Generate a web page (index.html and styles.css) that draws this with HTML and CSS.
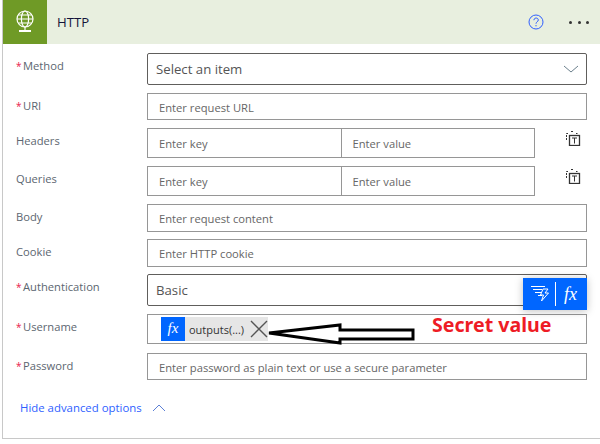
FILE: index.html
```html
<!DOCTYPE html>
<html lang="en">
<head>
    <meta charset="UTF-8">
    <title>HTTP</title>
    <link rel="stylesheet" href="styles.css">
</head>
<body>
    <div class="card">
        <div class="card-header">
            <div class="logo">
                <svg width="22" height="25" viewBox="0 0 22 25" fill="none" stroke="#fff" stroke-width="1.2">
                    <circle cx="11" cy="9" r="8"/>
                    <ellipse cx="11" cy="9" rx="3.6" ry="8"/>
                    <path d="M3 9h16M4.2 5h13.6M4.2 13h13.6M11 17v3"/>
                    <path d="M5 21h12" stroke-width="2"/>
                </svg>
            </div>
            <div class="card-title">HTTP</div>
            <svg class="help" width="16" height="16" viewBox="0 0 16 16" fill="none" stroke="#2f5fff" stroke-width="1">
                <circle cx="8" cy="8" r="7"/>
                <path d="M5.9 6.2c0-3 4.4-2.800 4.400-.2 0 1.800-2.300 1.800-2.300 3.700"/>
                <path d="M8 11v1.300"/>
            </svg>
            <div class="more"><span></span><span></span><span></span></div>
        </div>

        <div class="form">
            <div class="row h32">
                <div class="label"><i>*</i>Method</div>
                <div class="field dark select">
                    Select an item
                    <svg width="16" height="8" viewBox="0 0 16 8" fill="none" stroke="#6b7f8c"><path d="M1 1l7 6 7-6"/></svg>
                </div>
            </div>
            <div class="row h27">
                <div class="label"><i>*</i>URI</div>
                <div class="field hint">Enter request URL</div>
            </div>
            <div class="row h30">
                <div class="label plain">Headers</div>
                <div class="pair">
                    <div class="field hint">Enter key</div>
                    <div class="field hint">Enter value</div>
                </div>
                <svg class="text-mode" width="16" height="16" viewBox="0 0 16 16" fill="none" stroke="#333">
                    <path d="M1.500 10V3.500h2M6 1.500h3M11 3.500h1.500" stroke-dasharray="2 1"/>
                    <rect x="4.500" y="5.500" width="10" height="10" stroke-width="1.300"/>
                    <path d="M7 8h5M9.500 8v5.500"/>
                </svg>
            </div>
            <div class="row h30">
                <div class="label plain">Queries</div>
                <div class="pair">
                    <div class="field hint">Enter key</div>
                    <div class="field hint">Enter value</div>
                </div>
                <svg class="text-mode" width="16" height="16" viewBox="0 0 16 16" fill="none" stroke="#333">
                    <path d="M1.500 10V3.500h2M6 1.500h3M11 3.500h1.500" stroke-dasharray="2 1"/>
                    <rect x="4.500" y="5.500" width="10" height="10" stroke-width="1.300"/>
                    <path d="M7 8h5M9.500 8v5.500"/>
                </svg>
            </div>
            <div class="row h28">
                <div class="label plain">Body</div>
                <div class="field hint">Enter request content</div>
            </div>
            <div class="row h28 tight">
                <div class="label plain">Cookie</div>
                <div class="field hint">Enter HTTP cookie</div>
            </div>
            <div class="row h32 tight">
                <div class="label"><i>*</i>Authentication</div>
                <div class="field dark select">Basic</div>
            </div>
            <div class="row h30">
                <div class="label"><i>*</i>Username</div>
                <div class="field token-field">
                    <div class="token">
                        <span class="token-icon">fx</span>
                        <span class="token-text">outputs(...)</span>
                        <svg width="18" height="18" viewBox="0 0 18 18" stroke="#555" stroke-width="1.400"><path d="M1 1l16 16M17 1L1 17"/></svg>
                    </div>
                </div>
            </div>
            <div class="row h27 loose">
                <div class="label"><i>*</i>Password</div>
                <div class="field hint">Enter password as plain text or use a secure parameter</div>
            </div>
        </div>

        <div class="advanced">
            Hide advanced options
            <svg width="14" height="8" viewBox="0 0 14 8" fill="none" stroke="#5b7fd6"><path d="M1 7l6-6 6 6"/></svg>
        </div>

        <!-- dynamic content popup -->
        <div class="popup">
            <svg width="20" height="20" viewBox="0 0 20 20" fill="none" stroke="#fff">
                <path d="M1 2.500h14M3 5.500h9M5 8.500h6M8 11.500h4"/>
                <path d="M13 5h5l-3 4h3.500l-7 8 2-6h-3z"/>
            </svg>
            <span class="popup-sep"></span>
            <span class="popup-fx">fx</span>
        </div>

        <!-- annotation drawn over the screenshot -->
        <svg class="arrow" width="148" height="22" viewBox="0 0 148 22" fill="#fff" stroke="#000" stroke-width="3">
            <path d="M1 10L72 2v5h73v9H72v4z"/>
        </svg>
        <div class="secret">Secret value</div>
    </div>
</body>
</html>
```

FILE: styles.css
```css
* {
    box-sizing: border-box;
}
html, body {
    margin: 0;
    height: 444px;
    overflow: hidden;
    background: #fff;
}
body {
    font-family: "Open Sans", "Noto Sans", sans-serif;
    font-size: 11.2px;
    color: #555;
}
.card {
    position: relative;
    margin-left: 2px;
    width: 598px;
    height: 439px;
    border-left: 1px solid #c8c8c8;
    border-bottom: 1px solid #c8c8c8;
}
.card-header {
    display: flex;
    align-items: center;
    height: 44px;
    background: #e8efdf;
}
.logo {
    display: flex;
    align-items: center;
    justify-content: center;
    width: 44px;
    height: 44px;
    background: #6f9a26;
}
.card-title {
    margin-left: 10px;
    font-size: 13.2px;
    color: #14143a;
    flex: 1;
}
.help {
    margin-right: 25px;
}
.more {
    display: flex;
    gap: 5.5px;
    margin-right: 11px;
}
.more span {
    width: 3px;
    height: 3px;
    border-radius: 50%;
    background: #333;
}
.form {
    display: flex;
    flex-direction: column;
    padding-top: 9px;
    padding-right: 13px;
}
.row {
    display: flex;
    margin-bottom: 8px;
}
.tight {
    margin-top: -1px;
}
.loose {
    margin-top: 1px;
}
.h27 { height: 27px; }
.h28 { height: 28px; }
.h30 { height: 30px; }
.h32 { height: 32px; }
.label {
    width: 144px;
    padding: 5px 0 0 13px;
    color: #5c6670;
    flex-shrink: 0;
}
.label i {
    display: inline-block;
    width: 7px;
    color: #e8194b;
    font-style: normal;
    font-size: 10px;
}
.field {
    flex: 1;
    display: flex;
    align-items: center;
    padding: 1px 11px 0;
    border: 1px solid #969696;
    background: #fff;
}
.hint {
    color: #666;
}
.dark {
    border-color: #605e5c;
    border-radius: 2px;
    font-size: 13.2px;
    color: #555;
    padding-top: 0;
    padding-left: 8px;
}
.select {
    justify-content: space-between;
    padding-right: 7px;
}
.pair {
    display: flex;
    width: 388px;
}
.pair .field + .field {
    margin-left: -1px;
}
.text-mode {
    margin: 2px 0 0 30px;
}
.token-field {
    padding: 0 0 0 13px;
}
.token {
    display: flex;
    align-items: center;
    height: 24px;
    background: #e6e6e6;
    color: #333;
    font-size: 11px;
}
.token-icon {
    width: 24px;
    height: 24px;
    background: #0066ff;
    color: #fff;
    font-family: "Liberation Serif", serif;
    font-style: italic;
    font-size: 15px;
    line-height: 23px;
    text-align: center;
}
.token-text {
    margin: 0 6px 0 4px;
}
.advanced {
    display: flex;
    align-items: center;
    gap: 10px;
    margin: 12px 0 0 17px;
    font-size: 11.4px;
    color: #2f5fff;
}
.popup {
    position: absolute;
    left: 520px;
    top: 278px;
    display: flex;
    align-items: center;
    width: 64px;
    height: 32px;
    padding-left: 7px;
    background: #0066ff;
    box-shadow: 0 1px 8px rgba(0, 0, 0, 0.25);
}
.popup-sep {
    width: 1px;
    height: 24px;
    margin: 0 8px 0 5px;
    background: #fff;
}
.popup-fx {
    color: #fff;
    font-family: "Liberation Serif", serif;
    font-style: italic;
    font-size: 18px;
}
.arrow {
    position: absolute;
    left: 265px;
    top: 323px;
}
.secret {
    position: absolute;
    left: 429px;
    top: 311px;
    color: #ee1c25;
    font-size: 19.6px;
    font-weight: 700;
    font-family: "Noto Sans", sans-serif;
}
```
